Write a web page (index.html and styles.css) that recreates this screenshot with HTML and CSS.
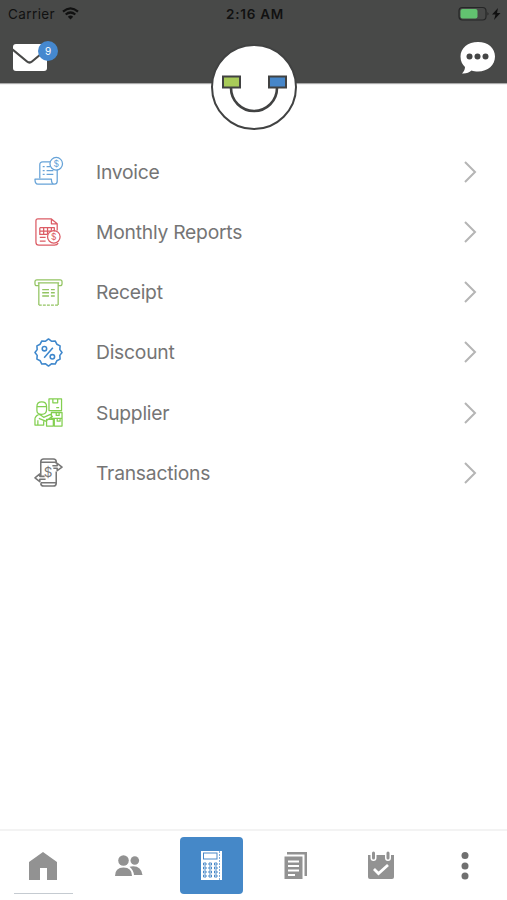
FILE: index.html
```html
<!DOCTYPE html>
<html lang="en">
<head>
<meta charset="utf-8">
<title>Menu</title>
<link rel="stylesheet" href="styles.css">
</head>
<body>
<div class="app">
  <header class="header">
    <div class="status">
      <div class="carrier"><span>Carrier</span>
        <svg width="17" height="13" viewBox="0 0 17 13" fill="none" stroke="#111" stroke-width="2.2"><path d="M1 4.6Q8.500-1.800 16 4.600M3.700 7.500Q8.500 3.500 13.300 7.500"/><path d="M8.500 12.500 5.800 9.700Q8.500 7.500 11.200 9.700Z" fill="#111" stroke="none"/></svg>
      </div>
      <div class="time">2:16 AM</div>
      <svg class="battery" width="44" height="16" viewBox="0 0 44 16"><rect x="1" y="1.500" width="27" height="12.500" rx="3.500" fill="none" stroke="#252626" stroke-width="1.200"/><rect x="2.500" y="3" width="17" height="9.500" rx="2" fill="#62c270"/><path d="M29.500 6q2 1.800 0 3.600z" fill="#222"/><path d="M40 2l-6 6.500h3.500L36 14l6.500-7H39z" fill="#111"/></svg>
    </div>
    <div class="actions">
      <div class="mail">
        <svg width="36" height="29" viewBox="0 0 36 29"><rect x="1" y="1" width="34" height="27" rx="3" fill="#fff"/><path d="M0 6l15 12.500q2.500 2 5 0L35 6" fill="none" stroke="#484948" stroke-width="2.200"/></svg>
        <span class="badge">9</span>
      </div>
      <svg width="37" height="34" viewBox="0 0 37 34"><path d="M19 1C9 1 1.500 7 1.500 15.500c0 5 2 8 4.500 10.500 0 3-1.500 5-3 6.500 4 .5 7-1 9.500-3 2 .7 4 1 6.500 1 10 0 17-6.500 17-15S29 1 19 1z" fill="#fff"/><g fill="#454646"><circle cx="10.500" cy="15.500" r="3"/><circle cx="18.500" cy="15.500" r="3"/><circle cx="26.500" cy="15.500" r="3"/></g></svg>
    </div>
    <svg class="logo" width="88" height="88" viewBox="0 0 88 88" stroke="#414242"><circle cx="44" cy="44" r="42" fill="#fff" stroke-width="2"/><path d="M21 45a23 23 0 0 0 46 0" fill="none" stroke-width="2.600"/><rect x="13" y="33.500" width="17" height="11" fill="#a8cb59" stroke-width="2"/><rect x="59" y="33.500" width="17" height="11" fill="#4686c9" stroke-width="2"/></svg>
  </header>
  <main class="menu">
    <div class="row">
      <svg class="icon blue" viewBox="0 0 30 30"><path d="M17 5H9Q6 5 6 8v14M24 13v12q0 3-3 3H4q-3 0-3-5h17q0 5 3 5M9 10h2m2 0h4M9 14h2m2 0h7M9 18h2m2 0h7"/><circle cx="23" cy="7" r="6.500"/><text x="23" y="10.200">$</text></svg>
      <span class="label">Invoice</span><svg class="chevron" viewBox="0 0 14 24"><path d="M2 2l10 10L2 22"/></svg>
    </div>
    <div class="row">
      <svg class="icon red" viewBox="0 0 30 30"><path d="M24 14V7l-6-5H4Q2 2 2 4v22q0 3 3 3h16q3 0 4-2M18 2v5h6M6 11h15v4M6 11v7h8M6 14.500h12M10 11v7M14 11v7M18 11v3M6 21h6M6 25h6"/><circle cx="20.500" cy="20.500" r="6.500"/><text x="20.500" y="23.700">$</text></svg>
      <span class="label">Monthly Reports</span><svg class="chevron" viewBox="0 0 14 24"><path d="M2 2l10 10L2 22"/></svg>
    </div>
    <div class="row">
      <svg class="icon green" viewBox="0 0 30 30"><path d="M5 8H3Q1 8 1 6V4q0-2 2-2h24q2 0 2 2v2q0 2-2 2h-2M4 5h22M5 5v23M25 5v23"/><path d="M5 28h20" stroke-dasharray="3 1.200"/><path d="M8.500 12h7m2 0h4m-13 3.300h7m2 0h4m-13 3.300h7m2 0h4" stroke-width="1.500"/></svg>
      <span class="label">Receipt</span><svg class="chevron" viewBox="0 0 14 24"><path d="M2 2l10 10L2 22"/></svg>
    </div>
    <div class="row">
      <svg class="icon cobalt" viewBox="0 0 30 30"><path d="M15 1l3 2.300 3.900-.3 1.700 3.400L27 8.100l-.3 3.900 2.300 3-2.300 3 .3 3.900-3.400 1.700-1.700 3.400-3.900-.3-3 2.300-3-2.300-3.900.3-1.700-3.400L3 21.900l.3-3.900L1 15l2.300-3L3 8.100l3.400-1.700L8.100 3l3.900.3zM19.500 10l-9 10.500"/><circle cx="10.800" cy="11" r="2.300"/><circle cx="19" cy="19.500" r="2.300"/></svg>
      <span class="label">Discount</span><svg class="chevron" viewBox="0 0 14 24"><path d="M2 2l10 10L2 22"/></svg>
    </div>
    <div class="row">
      <svg class="icon lime" viewBox="0 0 30 30"><path d="M15.500 1h13v12h-13zM19.500 1v4h5V1M23 10h3M18 15h11v6H18zM23 15v3h3v-3M13 22h7v7h-7zM21 21h8v8h-8zM24 21v3h3v-3M3 13V9q0-5 5-5 5 0 5 5v3q0 5-5 5t-5-4zM3 9h10M1 21q2-4 5-4l4 3 7-3 2 2-7 5-7-3M1 21v7h9v-4M4 23v5"/></svg>
      <span class="label">Supplier</span><svg class="chevron" viewBox="0 0 14 24"><path d="M2 2l10 10L2 22"/></svg>
    </div>
    <div class="row">
      <svg class="icon gray" viewBox="0 0 30 30"><path d="M7 18V4q0-3 3-3h10q3 0 3 3v2M7 4.500h16M23 14v12q0 3-3 3H10q-3 0-3-3M7 25.500h16M19 8h5V5.500L29 9.500 24 13v-2.500h-4M11 19H6v-2.500L1 20.500 6 24.500V22h6"/><text class="large" x="14.500" y="20">$</text></svg>
      <span class="label">Transactions</span><svg class="chevron" viewBox="0 0 14 24"><path d="M2 2l10 10L2 22"/></svg>
    </div>
  </main>
  <nav class="tabs">
    <div class="tab home"><svg width="30" height="30" viewBox="0 0 30 30"><path d="M1 29V11L15 1l14 10v18H19V17h-7v12z"/></svg></div>
    <div class="tab"><svg width="30" height="30" viewBox="0 0 30 30"><circle cx="10.500" cy="9.500" r="5.300"/><circle cx="21.800" cy="9.500" r="4.300"/><path d="M2 25q0-8.500 8.500-8.500T19 25zM16.500 15.700Q28 13.500 29.500 24h-8.500q-.5-5-4.500-8.300z"/></svg></div>
    <div class="tab"><div class="selected"><svg width="24" height="31" viewBox="0 0 24 31"><rect x="1" y="1" width="19" height="29" fill="#fff"/><path d="M20.500 1v29" stroke="#fff" stroke-width="3"/><path d="M19.500 1v29" stroke="#4888c8" stroke-width=".7" stroke-dasharray="2 1"/><g fill="#fff" stroke="#4888c8"><rect x="3.500" y="3" width="13.500" height="6"/><path d="M3.500 13h2.500v2H3.500zm5.500 0h2.500v2H9zm5.500 0H17v2h-2.500zM3.500 17h2.500v2H3.500zM9 17h2.500v2H9zm5.500 0H17v2h-2.500zM3.500 21h2.500v2H3.500zM9 21h2.500v2H9zm5.500 0H17v2h-2.500zM3.500 25h2.500v2H3.500zM9 25h2.500v2H9zm5.500 0H17v2h-2.500z"/></g></svg></div></div>
    <div class="tab"><svg width="26" height="30" viewBox="0 0 26 30"><path d="M4 1h20v24h-2.500V3.500H4z"/><path fill-rule="evenodd" d="M1.500 5.500h18V28h-18zM5 9.500v2h11v-2zm0 4.500v2h11v-2zm0 4.500v2h11v-2zM5 23v2h7v-2z"/></svg></div>
    <div class="tab"><svg width="28" height="30" viewBox="0 0 28 30"><path d="M1 4h26v22q0 2-2 2H3q-2 0-2-2z"/><path d="M6.500 1v6M21 1v6" stroke="#fff" stroke-width="6" stroke-linecap="round"/><path d="M6.500 2v5M21 2v5" stroke="#929292" stroke-width="3" stroke-linecap="round"/><path d="M7 18l4.500 4.500L21 14" fill="none" stroke="#fff" stroke-width="2.800"/></svg></div>
    <div class="tab more"><svg width="10" height="30" viewBox="0 0 10 30"><circle cx="5" cy="4.500" r="3.500"/><circle cx="5" cy="15" r="3.500"/><circle cx="5" cy="25" r="3.500"/></svg></div>
  </nav>
</div>
</body>
</html>
```

FILE: styles.css
```css
* { box-sizing: border-box; }
body { margin: 0; background: #fff; font-family: Inter, "Liberation Sans", sans-serif; }
svg { display: block; flex: none; }
.app { width: 507px; height: 900px; display: flex; flex-direction: column; }
.header { position: relative; height: 83px; flex: none; background: #484948; box-shadow: 0 1px 1px #aaa; }
.status { height: 27px; padding: 0 5px 0 8px; display: grid; grid-template-columns: 1fr auto 1fr; align-items: center; color: #111; font-size: 13.5px; }
.carrier { display: flex; align-items: center; gap: 7px; letter-spacing: .4px; }
.time { font-weight: 600; letter-spacing: .75px; }
.battery { justify-self: end; }
.actions { padding: 14px 11px 0 12px; display: flex; justify-content: space-between; }
.mail { position: relative; padding-top: 2px; }
.badge { position: absolute; left: 26px; top: 0; width: 20px; height: 20px; border-radius: 50%; background: #4588cf; color: #fff; font-size: 10px; line-height: 20px; text-align: center; }
.logo { position: absolute; left: 209.5px; top: 42.5px; }
.menu { flex: 1; padding: 58.5px 30px 0 34px; }
.row { height: 60.25px; display: flex; align-items: center; }
.icon { width: 29px; height: 29px; fill: none; stroke: currentColor; stroke-width: 1.3; stroke-linejoin: round; overflow: visible; }
.icon text { fill: currentColor; stroke: none; font-size: 9px; text-anchor: middle; }
.icon .large { font-size: 14px; }
.blue { color: #67a3d8; }
.red { color: #dc5c65; }
.green { color: #93c462; }
.cobalt { color: #3e87cc; stroke-width: 1.6; }
.lime { color: #83cf50; }
.gray { color: #777; stroke-width: 1.6; }
.label { flex: 1; margin-left: 33px; color: #757575; font-size: 19.3px; letter-spacing: -.24px; }
.chevron { width: 14px; height: 24px; fill: none; stroke: #b5b5b5; stroke-width: 2; }
.tabs { height: 71px; flex: none; border-top: 2px solid #f3f3f3; display: grid; grid-template-columns: repeat(6, 84.4px); padding-left: 1px; }
.tab { display: flex; align-items: center; justify-content: center; fill: #929292; }
.home { width: 59px; margin-left: 13px; height: 63px; padding-top: 7px; padding-right: 1px; border-bottom: 1px solid #c5cbd1; }
.selected { width: 63px; height: 57px; border-radius: 4px; background: #4588c8; display: flex; align-items: center; justify-content: center; }
.more { fill: #707070; }
```
